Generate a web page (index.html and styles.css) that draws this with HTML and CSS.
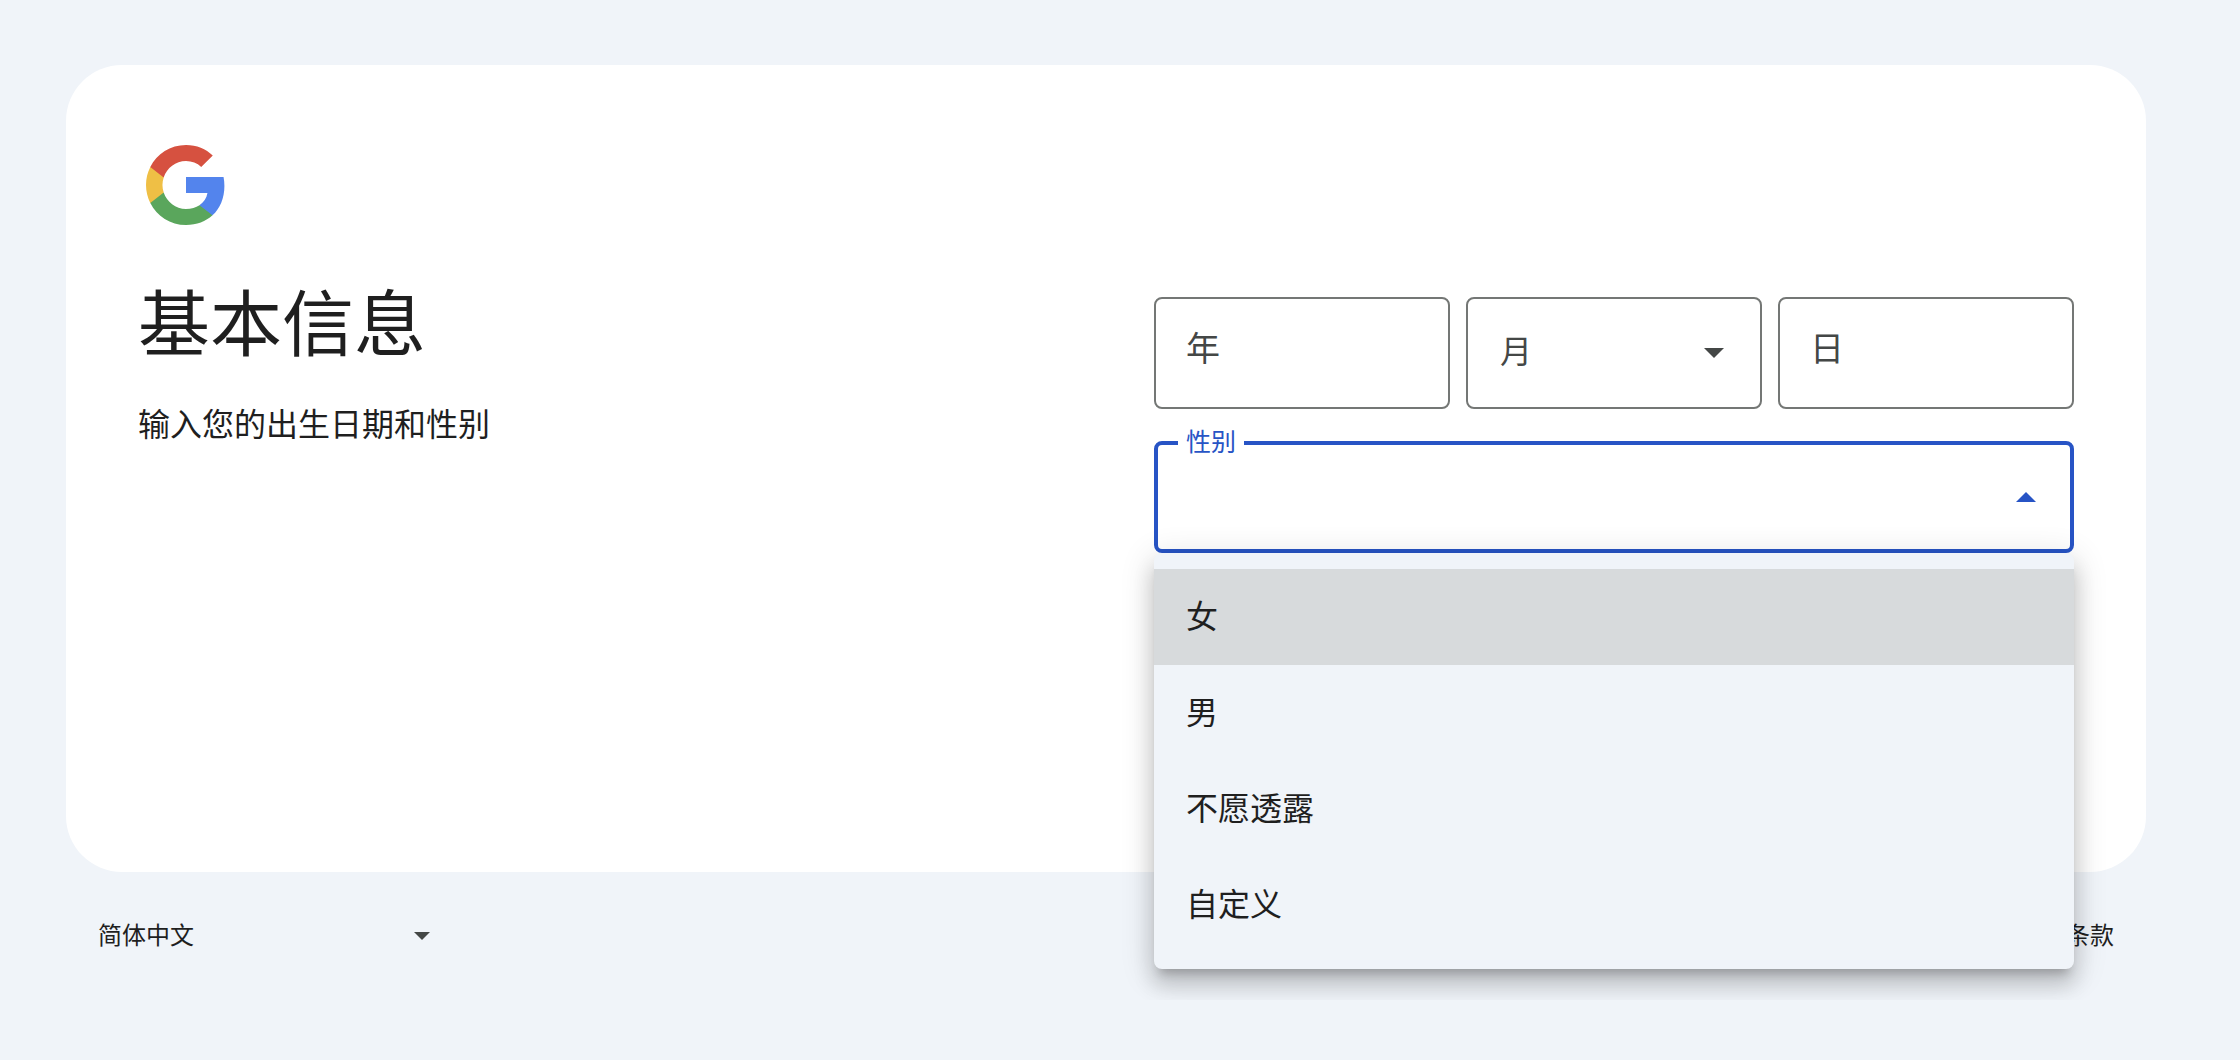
FILE: index.html
```html
<!DOCTYPE html>
<html lang="zh-CN">
<head>
    <meta charset="UTF-8">
    <meta name="viewport" content="width=device-width, initial-scale=1.0">
    <title>基本信息</title>
    <link rel="stylesheet" href="styles.css">
</head>
<body>
    <main class="card">
        <svg class="logo" viewBox="-4 0 48 48" aria-hidden="true">
            <path fill="#5384ed" d="M39.2 24.45c0-1.55-.16-3.04-.43-4.45H20v8h10.73c-.45 2.53-1.86 4.68-4 6.11v5.05h6.5c3.78-3.48 5.97-8.62 5.97-14.71z"/>
            <path fill="#5aa65c" d="M20 44c5.4 0 9.92-1.79 13.24-4.84l-6.5-5.05C24.95 35.3 22.67 36 20 36c-5.19 0-9.59-3.51-11.15-8.23h-6.7v5.2C5.43 39.51 12.18 44 20 44z"/>
            <path fill="#efbf45" d="M8.85 27.77c-.4-1.19-.62-2.46-.62-3.77s.22-2.58.62-3.77v-5.2h-6.7C.78 17.73 0 20.77 0 24s.78 6.27 2.14 8.97l6.71-5.2z"/>
            <path fill="#d65140" d="M20 12c2.93 0 5.55 1.01 7.62 2.98l5.76-5.76C29.92 5.98 25.39 4 20 4 12.18 4 5.43 8.49 2.14 15.03l6.7 5.2C10.41 15.51 14.81 12 20 12z"/>
        </svg>

        <div class="columns">
            <div class="intro">
                <h1>基本信息</h1>
                <p>输入您的出生日期和性别</p>
            </div>

            <form class="form">
                <div class="birthday">
                    <input class="control" type="text" placeholder="年" aria-label="年">
                    <div class="select">
                        <select class="control" aria-label="月">
                            <option>月</option>
                        </select>
                        <svg class="arrow" viewBox="0 0 10 5" aria-hidden="true"><path d="M0 0h10L5 5z"/></svg>
                    </div>
                    <input class="control" type="text" placeholder="日" aria-label="日">
                </div>

                <!-- Gender, menu open -->
                <div class="select open">
                    <select class="control" id="gender">
                        <option></option>
                    </select>
                    <svg class="arrow" viewBox="0 0 10 5" aria-hidden="true"><path d="M0 5h10L5 0z"/></svg>
                    <label class="float-label" for="gender">性别</label>
                    <ul class="menu" role="listbox" aria-label="性别">
                        <li class="menu-item active" role="option">女</li>
                        <li class="menu-item" role="option">男</li>
                        <li class="menu-item" role="option">不愿透露</li>
                        <li class="menu-item" role="option">自定义</li>
                    </ul>
                </div>
            </form>
        </div>
    </main>

    <footer class="footer">
        <div class="select language">
            <select aria-label="简体中文">
                <option>简体中文</option>
            </select>
            <svg class="arrow" viewBox="0 0 10 5" aria-hidden="true"><path d="M0 0h10L5 5z"/></svg>
        </div>
        <a href="#">条款</a>
    </footer>
</body>
</html>
```

FILE: styles.css
```css
/* General Styles */
* {
    box-sizing: border-box;
}

body {
    font-family: "Noto Sans CJK SC", sans-serif;
    margin: 0;
    padding: 65px 94px 0 66px;
    background: #f0f4f9;
    color: #1f1f1f;
}

/* Card */
.card {
    min-height: 807px;
    padding: 72px;
    background: white;
    border-radius: 56px;
}

.logo {
    display: block;
    width: 96px;
    height: 96px;
}

.columns {
    display: grid;
    grid-template-columns: 1fr 1fr;
    gap: 96px;
}

.intro {
    padding-top: 42px;
}

h1 {
    margin: 0;
    font-size: 72px;
    font-weight: 400;
    line-height: 88px;
}

.intro p {
    margin: 35px 0 0;
    font-size: 32px;
    line-height: 48px;
}

/* Form */
.form {
    display: flex;
    flex-direction: column;
    gap: 32px;
    padding-top: 64px;
}

.birthday {
    display: grid;
    grid-template-columns: repeat(3, 1fr);
    gap: 16px;
}

.control {
    width: 100%;
    height: 112px;
    padding: 0 32px 8px;
    border: 2px solid #747775;
    border-radius: 8px;
    background: white;
    color: #444746;
    font-family: inherit;
    font-size: 32px;
}

input.control {
    padding: 0 30px 14px;
    font-size: 34px;
}

.control::placeholder {
    color: #444746;
    opacity: 1;
}

/* The arrow shares the grid cell of its select */
.select {
    display: grid;
    position: relative;
    align-items: center;
}

.select > select,
.select > .arrow {
    grid-area: 1 / 1;
}

.select > select {
    appearance: none;
    outline: none;
}

.arrow {
    justify-self: end;
    width: 20px;
    height: 10px;
    margin-right: 38px;
    fill: #444746;
    pointer-events: none;
}

.open .control {
    border: 4px solid #2754c5;
}

.open .arrow {
    fill: #2754c5;
}

.float-label {
    position: absolute;
    top: -17px;
    left: 24px;
    padding: 0 8px;
    background: white;
    color: #2754c5;
    font-size: 25px;
    line-height: 32px;
}

/* Menu */
.menu {
    position: absolute;
    top: 100%;
    left: 0;
    right: 0;
    margin: 0;
    padding: 16px 0;
    list-style: none;
    background: #f0f4f9;
    border-radius: 8px;
    box-shadow: 0 10px 10px -6px rgba(0, 0, 0, 0.2),
        0 16px 20px 2px rgba(0, 0, 0, 0.14),
        0 6px 32px 4px rgba(0, 0, 0, 0.12);
}

.menu-item {
    padding: 0 32px 6px;
    font-size: 32px;
    line-height: 90px;
}

.menu-item.active {
    background: #d7dadc;
}

/* Footer */
.footer {
    display: flex;
    justify-content: space-between;
    align-items: center;
    padding: 38px 32px;
    font-size: 24px;
    line-height: 48px;
}

.footer a {
    padding-bottom: 4px;
    color: inherit;
    text-decoration: none;
}

.language {
    width: 332px;
}

.language select {
    padding: 0 0 4px;
    border: 0;
    background: none;
    color: inherit;
    font: inherit;
}

.language .arrow {
    width: 16px;
    height: 8px;
    margin-right: 0;
}
```
